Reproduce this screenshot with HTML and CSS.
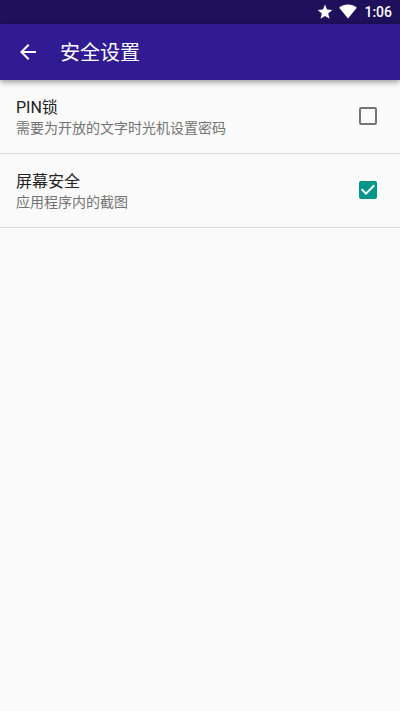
FILE: index.html
```html
<!DOCTYPE html>
<html lang="zh-CN">
<head>
<meta charset="utf-8">
<meta name="viewport" content="width=device-width, initial-scale=1">
<title>安全设置</title>
<link rel="stylesheet" href="styles.css">
</head>
<body>
<div class="status-bar">
  <svg class="status-icon" viewBox="0 0 16 16" aria-hidden="true"><path d="M8 .5l2 5 5.300.4-4.100 3.500 1.300 5.400L8 12l-4.500 2.800 1.300-5.400L.7 5.900 6 5.500z"/></svg>
  <svg class="status-icon wifi" viewBox="0 0 18 16" aria-hidden="true"><path d="M9 14.500L.2 3.700Q4 .4 9 .4t8.800 3.300z"/></svg>
  <span class="clock">1:06</span>
</div>
<header class="app-bar">
  <button class="back" type="button" aria-label="返回">
    <svg viewBox="0 0 24 24" aria-hidden="true"><path d="M20 11H7.830l5.590-5.590L12 4l-8 8 8 8 1.410-1.410L7.830 13H20z"/></svg>
  </button>
  <h1 class="title">安全设置</h1>
</header>
<main class="settings">
  <label class="setting">
    <span class="copy">
      <span class="name">PIN锁</span>
      <span class="summary">需要为开放的文字时光机设置密码</span>
    </span>
    <span class="check">
      <input type="checkbox">
      <svg viewBox="0 0 18 18" aria-hidden="true"><path d="M7 14L2 9l1.410-1.410L7 11.170l7.590-7.590L16 5z"/></svg>
    </span>
  </label>
  <label class="setting">
    <span class="copy">
      <span class="name">屏幕安全</span>
      <span class="summary">应用程序内的截图</span>
    </span>
    <span class="check">
      <input type="checkbox" checked>
      <svg viewBox="0 0 18 18" aria-hidden="true"><path d="M7 14L2 9l1.410-1.410L7 11.170l7.590-7.590L16 5z"/></svg>
    </span>
  </label>
</main>
</body>
</html>
```
FILE: styles.css
```css
* {
  box-sizing: border-box;
}

body {
  margin: 0;
  min-height: 100vh;
  background: #fafafa;
  color: #212121;
  font-family: Roboto, "Noto Sans CJK SC", sans-serif;
}

.status-bar {
  display: flex;
  align-items: center;
  justify-content: flex-end;
  height: 24px;
  padding: 0 8px;
  background: #1e105a;
  color: #fff;
}

.status-icon {
  width: 16px;
  height: 16px;
  margin-right: 6px;
  fill: currentColor;
}

.wifi {
  width: 18px;
  margin-right: 7px;
}

.clock {
  font-size: 14px;
  font-weight: 500;
  line-height: 24px;
}

.app-bar {
  display: flex;
  align-items: center;
  height: 56px;
  padding: 0 16px;
  gap: 20px;
  background: #311b92;
  color: #fff;
  box-shadow: 0 2px 6px rgba(0, 0, 0, 0.4);
}

.back {
  width: 24px;
  height: 24px;
  padding: 0;
  border: 0;
  background: none;
  color: inherit;
}

.back svg {
  display: block;
  fill: currentColor;
}

.title {
  margin: 0;
  padding-top: 2px;
  font-size: 20px;
  font-weight: 400;
  line-height: 28px;
}

.setting {
  display: flex;
  align-items: center;
  justify-content: space-between;
  min-height: 74px;
  padding: 0 23px 1px 16px;
  border-bottom: 1px solid #dadada;
}

.copy {
  display: flex;
  flex-direction: column;
  padding-top: 4px;
}

.name {
  font-size: 16px;
  line-height: 20px;
}

.summary {
  color: #737373;
  font-size: 14px;
  line-height: 20px;
}

.check {
  display: grid;
  width: 18px;
  height: 18px;
}

.check input,
.check svg {
  grid-area: 1 / 1;
  width: 18px;
  height: 18px;
  margin: 0;
}

.check input {
  appearance: none;
  border: 2px solid #737373;
  border-radius: 2px;
}

.check input:checked {
  border-color: #009688;
  background: #009688;
}

.check svg {
  visibility: hidden;
  fill: #fff;
  pointer-events: none;
}

.check input:checked + svg {
  visibility: visible;
}
```
